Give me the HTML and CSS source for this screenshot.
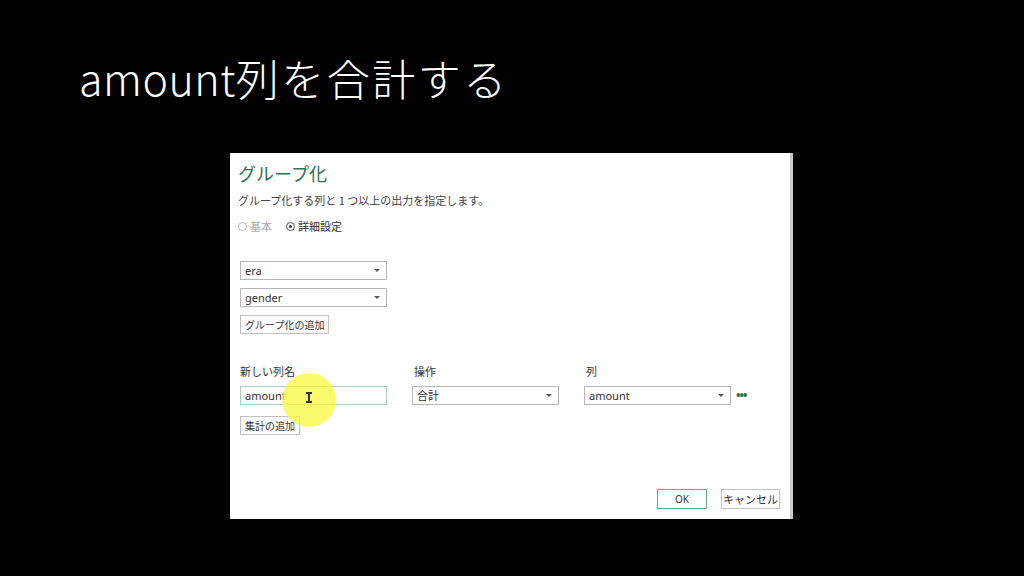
FILE: index.html
```html
<!DOCTYPE html>
<html lang="ja">
<head>
    <meta charset="UTF-8">
    <meta name="viewport" content="width=device-width, initial-scale=1.0">
    <title>amount列を合計する</title>
    <link rel="stylesheet" href="styles.css">
</head>
<body>
    <h1 class="slide-title">amount<span class="jp">列を合計する</span></h1>

    <div class="dialog">
        <h2 class="dialog-title">グループ化</h2>
        <p class="dialog-desc">グループ化する列と 1 つ以上の出力を指定します。</p>

        <div class="radio-row">
            <label class="radio disabled"><span class="dot"></span>基本</label>
            <label class="radio"><span class="dot checked"></span>詳細設定</label>
        </div>

        <!-- Group by columns -->
        <div class="group-list">
            <div class="select">era<span class="arrow"></span></div>
            <div class="select">gender<span class="arrow"></span></div>
            <button class="btn">グループ化の追加</button>
        </div>

        <!-- Aggregations -->
        <div class="agg-grid">
            <div class="agg-col">
                <div class="agg-label">新しい列名</div>
                <div class="input focused">amount
                    <span class="highlight"></span>
                    <span class="ibeam"></span>
                </div>
            </div>
            <div class="agg-col">
                <div class="agg-label">操作</div>
                <div class="select">合計<span class="arrow"></span></div>
            </div>
            <div class="agg-col">
                <div class="agg-label">列</div>
                <div class="select-row">
                    <div class="select">amount<span class="arrow"></span></div>
                    <span class="more">•••</span>
                </div>
            </div>
        </div>
        <button class="btn add-agg">集計の追加</button>

        <div class="footer">
            <button class="btn ok">OK</button>
            <button class="btn cancel">キャンセル</button>
        </div>
    </div>
</body>
</html>
```

FILE: styles.css
```css
body {
    margin: 0;
    width: 1024px;
    height: 576px;
    background-color: #000;
    font-family: "Segoe UI", "Noto Sans", "Noto Sans CJK JP", sans-serif;
    overflow: hidden;
}
.slide-title {
    margin: 0;
    padding: 52px 0 0 79px;
    height: 101px;
    box-sizing: border-box;
    color: #fff;
    font-family: "Noto Sans CJK JP", sans-serif;
    font-weight: 200;
    font-size: 43px;
    line-height: 50px;
    letter-spacing: 0.5px;
    white-space: nowrap;
}
.slide-title .jp {
    letter-spacing: 2.5px;
}
.dialog {
    margin: 52px 0 0 230px;
    width: 563px;
    height: 366px;
    box-sizing: border-box;
    background-color: #fff;
    border-right: 3px solid #c8c8c8;
    padding: 7px 0 0 8px;
    position: relative;
    color: #333;
}
.dialog-title {
    margin: 0;
    font-family: "Noto Sans CJK JP", sans-serif;
    font-weight: 400;
    font-size: 18px;
    line-height: 26px;
    color: #2f7350;
}
.dialog-desc {
    margin: 6px 0 0;
    font-family: "Noto Sans CJK JP", sans-serif;
    font-size: 11px;
    line-height: 16px;
    color: #444;
}
.radio-row {
    display: flex;
    gap: 14px;
    margin-top: 10px;
    font-family: "Noto Sans CJK JP", sans-serif;
    font-size: 11px;
    line-height: 16px;
}
.radio {
    display: flex;
    align-items: center;
    gap: 3px;
    color: #333;
}
.radio.disabled {
    color: #aaa;
}
.dot {
    width: 9px;
    height: 9px;
    border: 1px solid #bbb;
    border-radius: 50%;
    box-sizing: border-box;
    position: relative;
}
.dot.checked {
    border-color: #555;
}
.dot.checked::after {
    content: "";
    position: absolute;
    left: 2px;
    top: 2px;
    width: 3px;
    height: 3px;
    border-radius: 50%;
    background-color: #333;
}
.group-list {
    margin-top: 27px;
    display: flex;
    flex-direction: column;
    align-items: flex-start;
    gap: 8px;
}
.select, .input {
    width: 147px;
    height: 19px;
    box-sizing: border-box;
    border: 1px solid #b8b8b8;
    padding: 0 4px;
    margin-left: 2px;
    font-size: 11px;
    line-height: 17px;
    color: #333;
    position: relative;
    font-family: "Segoe UI", "Noto Sans", "Noto Sans CJK JP", sans-serif;
}
.arrow {
    position: absolute;
    right: 6px;
    top: 7px;
    border-left: 3px solid transparent;
    border-right: 3px solid transparent;
    border-top: 3px solid #555;
}
.btn {
    display: block;
    margin-left: 2px;
    height: 19px;
    padding: 0 4px;
    border: 1px solid #c0c0c0;
    background-color: #fff;
    font-family: "Noto Sans CJK JP", sans-serif;
    font-size: 10px;
    line-height: 16px;
    color: #333;
    white-space: nowrap;
}
.agg-grid {
    display: flex;
    gap: 25px;
    margin-top: 30px;
}
.agg-label {
    font-family: "Noto Sans CJK JP", sans-serif;
    font-size: 11px;
    line-height: 14px;
    margin: 0 0 8px 2px;
    color: #333;
}
.agg-col:nth-child(2) .select {
    margin-left: 0;
}
.agg-col:nth-child(3) .select {
    margin-left: 0;
}
.input.focused {
    border-color: #a9d2bc;
    margin-top: 1px;
}
.highlight {
    position: absolute;
    left: 41px;
    top: -14px;
    width: 54px;
    height: 54px;
    border-radius: 50%;
    background-color: rgba(250, 250, 60, 0.75);
}
.ibeam {
    position: absolute;
    left: 67px;
    top: 5px;
    width: 2px;
    height: 11px;
    background-color: #333;
}
.ibeam::before, .ibeam::after {
    content: "";
    position: absolute;
    left: -2px;
    width: 6px;
    height: 2px;
    background-color: #333;
}
.ibeam::before { top: 0; }
.ibeam::after { bottom: 0; }
.select-row {
    display: flex;
    align-items: center;
    gap: 5px;
}
.more {
    color: #2f7350;
    font-size: 12px;
    font-weight: bold;
    letter-spacing: -1px;
}
.add-agg {
    margin-top: 11px;
}
.footer {
    position: absolute;
    right: 10px;
    bottom: 10px;
    display: flex;
    gap: 14px;
}
.footer .btn {
    height: 20px;
    margin: 0;
    padding: 0;
}
.btn.ok {
    width: 50px;
    border-color: #6aa98a;
    font-family: "Segoe UI", "Noto Sans", sans-serif;
}
.btn.cancel {
    width: 59px;
    font-size: 11px;
}
```
